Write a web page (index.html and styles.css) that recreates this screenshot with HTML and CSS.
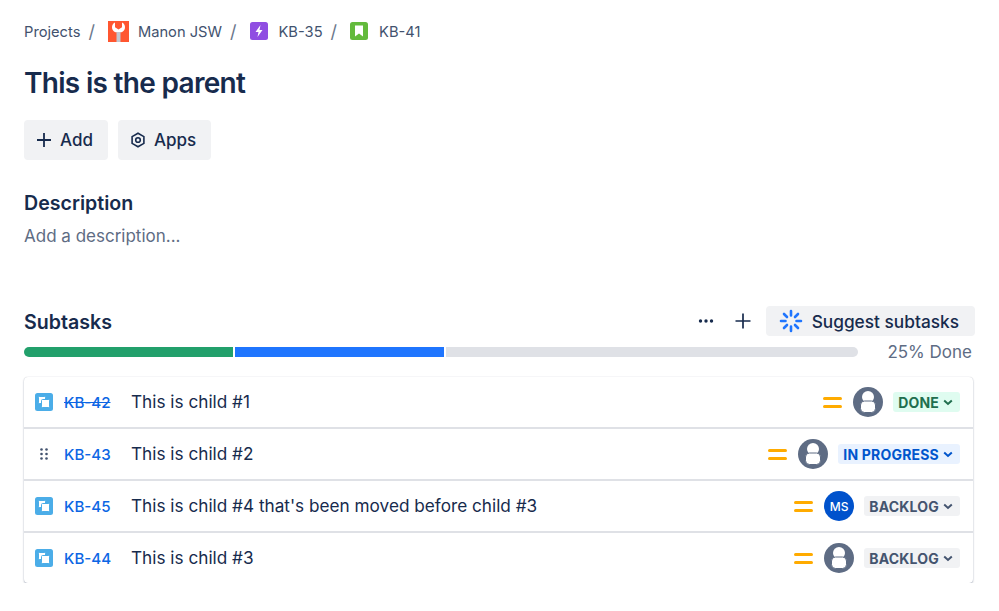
FILE: index.html
```html
<!DOCTYPE html>
<html lang="en">
<head>
    <meta charset="UTF-8">
    <title>This is the parent</title>
    <link rel="stylesheet" href="styles.css">
</head>
<body>
<nav class="crumbs">
    <span>Projects</span><span class="sep">/</span>
    <svg class="project-icon" width="21" height="21" viewBox="0 0 21 21"><rect width="21" height="21" fill="#ff5630"/><path d="M7 1.500v4.700l3.500 2.200L14 6.200V1.500c2 .9 3 2.800 3 4.800 0 2.300-1.300 4.100-3.500 5h-6C5.300 10.400 4 8.600 4 6.300c0-2 1-3.900 3-4.800z" fill="#fff"/><rect x="8.500" y="11" width="4" height="10" fill="#c1c7d0"/></svg>
    <span>Manon JSW</span><span class="sep">/</span>
    <svg class="type-icon" width="18" height="18" viewBox="0 0 18 18"><rect width="18" height="18" rx="2.500" fill="#904ee2"/><path d="M10.500 3 5.500 10h3L7.500 15l5-7h-3z" fill="#fff"/></svg>
    <span>KB-35</span><span class="sep">/</span>
    <svg class="type-icon" width="18" height="18" viewBox="0 0 18 18"><rect width="18" height="18" rx="2.500" fill="#63ba3c"/><path d="M5 3.500h8v11L9 11.500l-4 3z" fill="#fff"/></svg>
    <span>KB-41</span>
</nav>

<h1>This is the parent</h1>

<div class="actions">
    <button class="btn">
        <svg width="16" height="16" viewBox="0 0 16 16"><path d="M8 1v14M1 8h14" stroke="#172b4d" stroke-width="1.800"/></svg>
        Add
    </button>
    <button class="btn">
        <svg width="16" height="16" viewBox="0 0 16 16" fill="none" stroke="#172b4d" stroke-width="1.600"><path d="M8 1.200l5.900 3.400v6.800L8 14.800l-5.900-3.400V4.600z"/><circle cx="8" cy="8" r="2.300"/></svg>
        Apps
    </button>
</div>

<h2 class="desc-title">Description</h2>
<p class="desc-text">Add a description...</p>

<div class="sub-head">
    <h2 class="sub-title">Subtasks</h2>
    <div class="sub-tools">
        <svg width="16" height="4" viewBox="0 0 16 4" fill="#172b4d"><circle cx="2.500" cy="2" r="1.700"/><circle cx="8" cy="2" r="1.700"/><circle cx="13.500" cy="2" r="1.700"/></svg>
        <svg class="tool-plus" width="16" height="16" viewBox="0 0 16 16"><path d="M8 .5v15M.5 8h15" stroke="#172b4d" stroke-width="1.700"/></svg>
        <button class="suggest">
            <svg width="24" height="24" viewBox="0 0 24 24" stroke="#1f75fe" stroke-width="2.600" stroke-linecap="round"><path d="M12 2v4.500M12 17.500V22M2 12h4.500M17.500 12H22M5 5l3 3M16 16l3 3M19 5l-3 3M8 16l-3 3"/></svg>
            Suggest subtasks
        </button>
    </div>
</div>

<div class="progress">
    <div class="bars">
        <div class="bar green"></div>
        <div class="bar blue"></div>
        <div class="bar grey"></div>
    </div>
    <span class="pct">25% Done</span>
</div>

<div class="list">
    <div class="row">
        <svg class="sub-icon" width="18" height="18" viewBox="0 0 18 18"><use href="#subtask"/></svg>
        <a class="key done-key">KB-42</a>
        <span class="summary">This is child #1</span>
        <svg class="prio" width="19" height="13" viewBox="0 0 19 13"><use href="#medium"/></svg>
        <span class="avatar"><svg width="30" height="30" viewBox="0 0 30 30"><use href="#person"/></svg></span>
        <span class="status st-done">DONE <svg width="10" height="7" viewBox="0 0 10 7"><use href="#chev"/></svg></span>
    </div>
    <div class="row">
        <svg class="sub-icon" width="18" height="18" viewBox="0 0 18 18" fill="#42526e"><circle cx="6.500" cy="4.500" r="1.300"/><circle cx="11.500" cy="4.500" r="1.300"/><circle cx="6.500" cy="9" r="1.300"/><circle cx="11.500" cy="9" r="1.300"/><circle cx="6.500" cy="13.500" r="1.300"/><circle cx="11.500" cy="13.500" r="1.300"/></svg>
        <a class="key">KB-43</a>
        <span class="summary">This is child #2</span>
        <svg class="prio" width="19" height="13" viewBox="0 0 19 13"><use href="#medium"/></svg>
        <span class="avatar"><svg width="30" height="30" viewBox="0 0 30 30"><use href="#person"/></svg></span>
        <span class="status st-progress">IN PROGRESS <svg width="10" height="7" viewBox="0 0 10 7"><use href="#chev"/></svg></span>
    </div>
    <div class="row">
        <svg class="sub-icon" width="18" height="18" viewBox="0 0 18 18"><use href="#subtask"/></svg>
        <a class="key">KB-45</a>
        <span class="summary">This is child #4 that's been moved before child #3</span>
        <svg class="prio" width="19" height="13" viewBox="0 0 19 13"><use href="#medium"/></svg>
        <span class="avatar initials">MS</span>
        <span class="status st-backlog">BACKLOG <svg width="10" height="7" viewBox="0 0 10 7"><use href="#chev"/></svg></span>
    </div>
    <div class="row">
        <svg class="sub-icon" width="18" height="18" viewBox="0 0 18 18"><use href="#subtask"/></svg>
        <a class="key">KB-44</a>
        <span class="summary">This is child #3</span>
        <svg class="prio" width="19" height="13" viewBox="0 0 19 13"><use href="#medium"/></svg>
        <span class="avatar"><svg width="30" height="30" viewBox="0 0 30 30"><use href="#person"/></svg></span>
        <span class="status st-backlog">BACKLOG <svg width="10" height="7" viewBox="0 0 10 7"><use href="#chev"/></svg></span>
    </div>
</div>

<!-- shared icons -->
<svg class="defs" width="0" height="0">
    <defs>
        <g id="subtask">
            <rect width="18" height="18" rx="2.500" fill="#4bade8"/>
            <rect x="3.500" y="3.500" width="7" height="7" rx="1" fill="#fff" stroke="#4bade8"/>
            <rect x="6.500" y="6.500" width="8" height="8" rx="1" fill="#fff" stroke="#4bade8"/>
        </g>
        <g id="medium" fill="#ffab00">
            <rect y="1" width="19" height="3" rx="1.500"/>
            <rect y="9" width="19" height="3" rx="1.500"/>
        </g>
        <g id="person">
            <circle cx="15" cy="15" r="15" fill="#5e6c84"/>
            <circle cx="15" cy="10" r="6" fill="#fff"/>
            <rect x="7.500" y="14" width="15" height="11.500" rx="4" fill="#fff" stroke="#5e6c84" stroke-width="1"/>
        </g>
        <path id="chev" d="M1.200 1.500 5 5l3.800-3.500" fill="none" stroke="currentColor" stroke-width="2"/>
    </defs>
</svg>
</body>
</html>
```

FILE: styles.css
```css
body {
    font-family: Inter, "Liberation Sans", sans-serif;
    margin: 0;
    padding: 20px 24px 0 24px;
    background: #fff;
    color: #172b4d;
}
.crumbs {
    display: flex;
    align-items: center;
    height: 22px;
    font-size: 14.700px;
    color: #42526e;
}
.crumbs span:not(.sep) {
    padding-top: 2px;
}
.sep {
    margin: 0 13px 0 8px;
    font-size: 18px;
    color: #6b778c;
}
.project-icon {
    margin-right: 9px;
}
.type-icon {
    margin-right: 11px;
}
h1 {
    margin: 21px 0 0 0;
    font-size: 28px;
    line-height: 40px;
    font-weight: 600;
    letter-spacing: -0.7px;
}
.actions {
    display: flex;
    gap: 10px;
    margin-top: 17px;
}
.btn {
    display: flex;
    align-items: center;
    gap: 8px;
    height: 40px;
    padding: 0 15px 0 12px;
    border: none;
    border-radius: 4px;
    background: #f1f2f4;
    color: #172b4d;
    font-family: inherit;
    font-size: 17px;
    font-weight: 500;
}
h2 {
    margin: 0;
    font-size: 19.600px;
    font-weight: 600;
}
.desc-title {
    margin-top: 31px;
    line-height: 24px;
}
.desc-text {
    margin: 9px 0 0 0;
    font-size: 17px;
    line-height: 24px;
    color: #5e6c84;
}
.sub-head {
    display: flex;
    justify-content: space-between;
    align-items: center;
    margin-top: 58px;
}
.sub-title {
    padding-top: 2px;
}
.sub-tools {
    display: flex;
    align-items: center;
}
.tool-plus {
    margin: 0 15px 0 21px;
}
.suggest {
    display: flex;
    align-items: center;
    gap: 9px;
    height: 30px;
    padding: 0 16px 0 13px;
    border: none;
    border-radius: 4px;
    background: #f1f2f4;
    color: #172b4d;
    font-family: inherit;
    font-size: 17.300px;
    font-weight: 500;
}
.progress {
    display: flex;
    align-items: center;
    justify-content: space-between;
    margin-top: 4px;
    height: 24px;
}
.bars {
    display: flex;
    gap: 2px;
    width: 834px;
}
.bar {
    flex: 1;
    height: 10px;
}
.green {
    background: #22a06b;
    border-radius: 5px 0 0 5px;
}
.blue {
    background: #1f75fe;
}
.grey {
    background: #dfe1e6;
    border-radius: 0 5px 5px 0;
    flex: 1.970;
}
.pct {
    font-size: 17px;
    color: #5e6c84;
    margin-right: 3px;
}
.list {
    width: 949px;
    margin-top: 13px;
    border-radius: 4px;
    box-shadow: 0 1px 2px rgba(9, 30, 66, 0.3), 0 0 1px rgba(9, 30, 66, 0.2);
}
.row {
    display: flex;
    align-items: center;
    height: 50px;
    padding: 0 13px 0 11px;
    border-bottom: 2px solid #dfe1e6;
}
.row:last-child {
    border-bottom: none;
}
.key {
    margin-left: 11px;
    width: 67px;
    font-size: 15.100px;
    font-weight: 500;
    color: #0c66e4;
}
.done-key {
    text-decoration: line-through;
}
.summary {
    flex: 1;
    padding-bottom: 2px;
    font-size: 17.200px;
}
.avatar {
    display: flex;
    width: 30px;
    height: 30px;
    margin: 0 10px 0 11px;
}
.initials {
    align-items: center;
    justify-content: center;
    border-radius: 50%;
    background: #0052cc;
    color: #fff;
    font-size: 12px;
    font-weight: 500;
}
.status {
    display: flex;
    align-items: center;
    gap: 4px;
    height: 20px;
    padding: 0 7px 0 5px;
    border-radius: 3px;
    font-size: 14px;
    font-weight: 700;
    letter-spacing: 0.200px;
}
.st-done {
    background: #dffcf0;
    color: #216e4e;
}
.st-progress {
    background: #e9f2ff;
    color: #0055cc;
}
.st-backlog {
    background: #f1f2f4;
    color: #44546f;
}
.defs {
    position: absolute;
}
```
